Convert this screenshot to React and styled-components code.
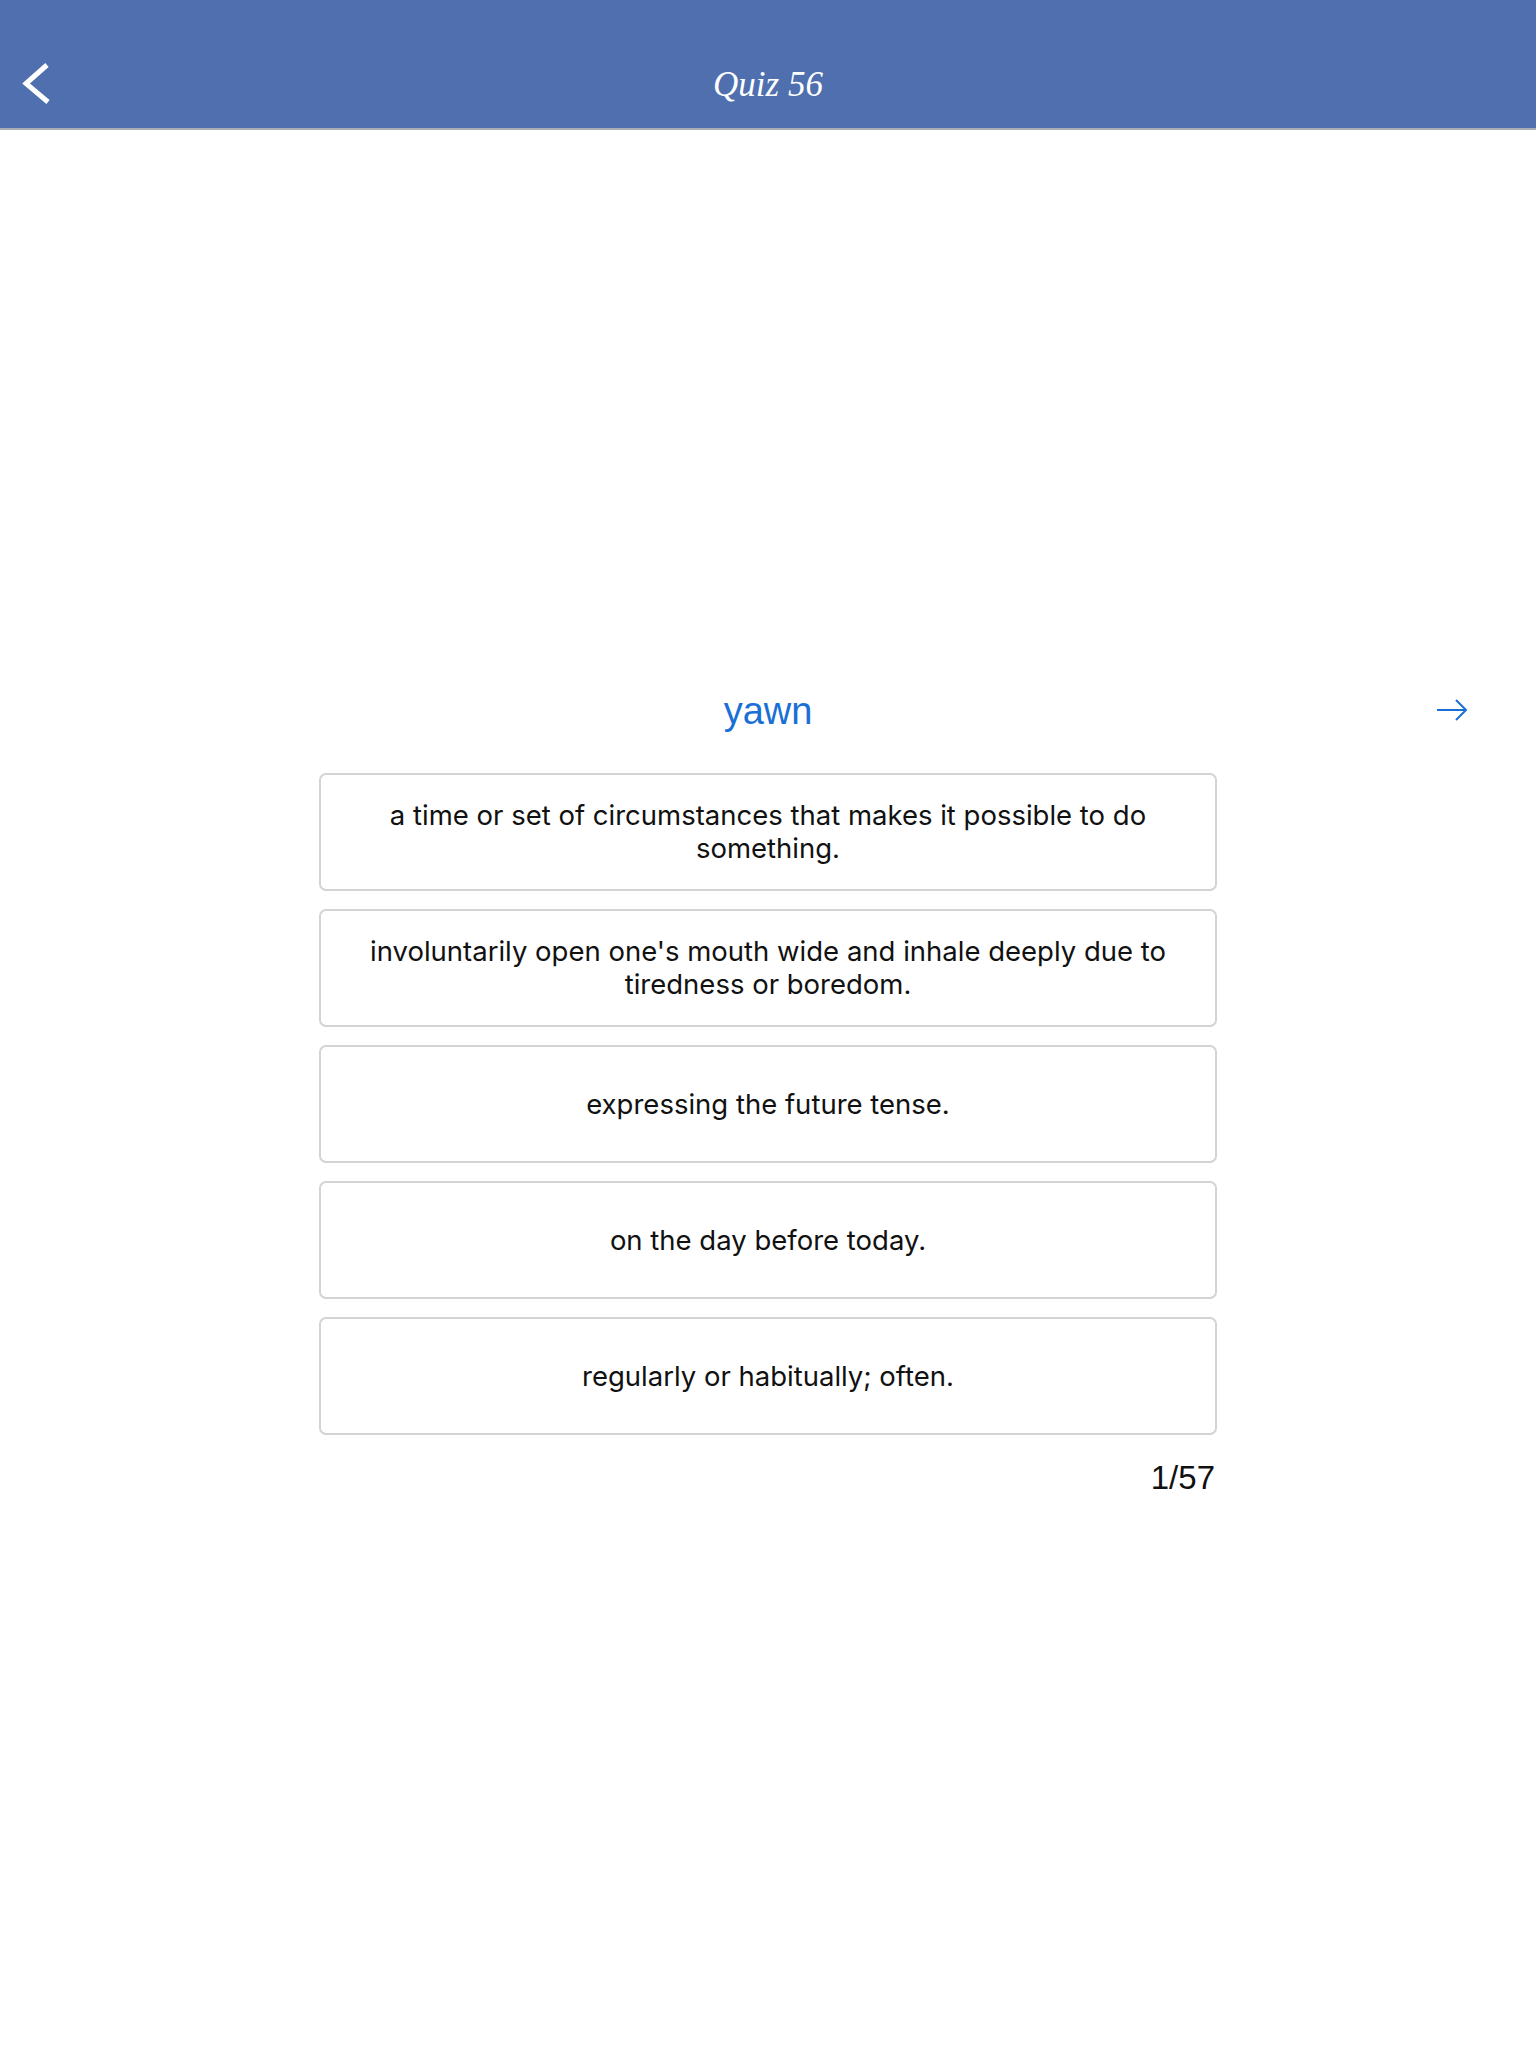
import React from "react";
import styled, { createGlobalStyle } from "styled-components";

const GlobalStyle = createGlobalStyle`
  html, body {
    margin: 0;
    padding: 0;
    background: #ffffff;
  }
  body {
    font-family: "Liberation Sans", Arial, sans-serif;
    min-height: 2048px;
  }
  * { box-sizing: border-box; }
`;

const Page = styled.div`
  width: 1536px;
  min-height: 2048px;
  background: #ffffff;
  display: flex;
  flex-direction: column;
`;

const Header = styled.header`
  position: relative;
  height: 130px;
  background: #4f6fae;
  border-bottom: 2px solid #a9adb6;
  padding-top: 42px;
  display: flex;
  align-items: center;
  justify-content: center;
`;

const BackButton = styled.button`
  position: absolute;
  left: 18px;
  top: 58px;
  width: 40px;
  height: 52px;
  padding: 0;
  border: none;
  background: transparent;
  display: flex;
  align-items: center;
  justify-content: center;
  cursor: pointer;
`;

const Title = styled.h1`
  margin: 0;
  height: 86px;
  display: flex;
  align-items: center;
  font-family: "Liberation Serif", "Times New Roman", serif;
  font-style: italic;
  font-weight: normal;
  font-size: 35px;
  color: #ffffff;
`;

const Main = styled.main`
  display: flex;
  flex-direction: column;
  align-items: center;
  padding-top: 559px;
`;

const WordRow = styled.div`
  width: 100%;
  display: grid;
  grid-template-columns: 1fr auto 1fr;
  align-items: center;
  height: 44px;
`;

const Word = styled.div`
  grid-column: 2;
  font-family: "Liberation Sans", Arial, sans-serif;
  font-size: 38px;
  line-height: 44px;
  color: #1a6fd6;
`;

const NextButton = styled.button`
  grid-column: 3;
  justify-self: end;
  margin-right: 64px;
  width: 40px;
  height: 40px;
  padding: 0;
  border: none;
  background: transparent;
  display: flex;
  align-items: center;
  justify-content: center;
  cursor: pointer;
  margin-top: -2px;
`;

const Options = styled.div`
  width: 898px;
  margin-top: 40px;
  display: flex;
  flex-direction: column;
  gap: 18px;
`;

const Option = styled.button`
  height: 118px;
  width: 100%;
  border: 2px solid #d3d3d3;
  border-radius: 7px;
  background: #ffffff;
  padding: 0 22px;
  display: flex;
  align-items: center;
  justify-content: center;
  text-align: center;
  font-family: Inter, "Noto Sans", sans-serif;
  font-size: 27.5px;
  line-height: 33px;
  color: #111111;
  cursor: pointer;
`;

const Counter = styled.div`
  width: 898px;
  margin-top: 25px;
  text-align: right;
  padding-right: 2px;
  font-family: "Liberation Sans", Arial, sans-serif;
  font-size: 33px;
  line-height: 36px;
  color: #111111;
`;

const options = [
  "a time or set of circumstances that makes it possible to do something.",
  "involuntarily open one's mouth wide and inhale deeply due to tiredness or boredom.",
  "expressing the future tense.",
  "on the day before today.",
  "regularly or habitually; often.",
];

export default function App() {
  return (
    <>
      <GlobalStyle />
      <Page>
        <Header>
          <BackButton aria-label="Back">
            <svg width="40" height="52" viewBox="0 0 40 52">
              <polyline
                points="29,7 8,25.5 30,44"
                fill="none"
                stroke="#ffffff"
                strokeWidth="5"
                strokeLinecap="butt"
                strokeLinejoin="miter"
              />
            </svg>
          </BackButton>
          <Title>Quiz 56</Title>
        </Header>
        <Main>
          <WordRow>
            <Word>yawn</Word>
            <NextButton aria-label="Next">
              <svg width="34" height="24" viewBox="0 0 34 24">
                <line x1="2" y1="12" x2="31" y2="12" stroke="#1a6fd6" strokeWidth="2" />
                <polyline
                  points="21,2 31,12 21,22"
                  fill="none"
                  stroke="#1a6fd6"
                  strokeWidth="2"
                />
              </svg>
            </NextButton>
          </WordRow>
          <Options>
            {options.map((o) => (
              <Option key={o}>{o}</Option>
            ))}
          </Options>
          <Counter>1/57</Counter>
        </Main>
      </Page>
    </>
  );
}
